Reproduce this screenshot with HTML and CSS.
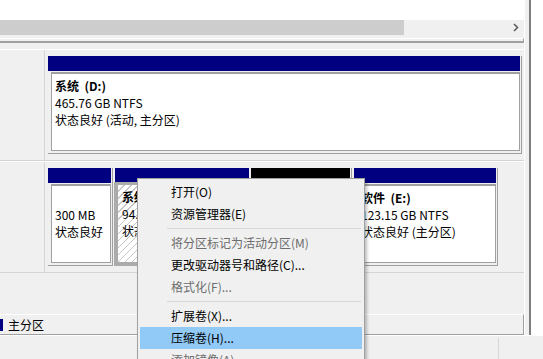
FILE: index.html
```html
<!DOCTYPE html>
<html lang="zh-CN">
<head>
    <meta charset="UTF-8">
    <title>磁盘管理</title>
    <link rel="stylesheet" href="styles.css">
</head>
<body>
    <div class="app">
        <div class="work">
            <div class="main">
                <!-- volume list (scrolled) -->
                <div class="list-body"></div>
                <div class="hscroll">
                    <div class="thumb"></div>
                    <div class="track"></div>
                    <div class="arrow">
                        <svg width="6" height="9" viewBox="0 0 6 9"><polyline points="1,1 4.5,4.5 1,8" fill="none" stroke="#606060" stroke-width="1.6"/></svg>
                    </div>
                </div>
                <div class="list-edge"></div>

                <!-- graphical view -->
                <div class="graph">
                    <div class="disk">
                        <div class="disk-label"></div>
                        <div class="parts">
                            <div class="part p-sysd">
                                <div class="head"></div>
                                <div class="body">
                                    <div class="box"><b>系统  (D:)</b>
465.76 GB NTFS
状态良好 (活动, 主分区)</div>
                                </div>
                            </div>
                        </div>
                    </div>
                    <div class="disk">
                        <div class="disk-label"></div>
                        <div class="parts">
                            <div class="part p-boot">
                                <div class="head"></div>
                                <div class="body">
                                    <div class="box">
300 MB
状态良好</div>
                                </div>
                            </div>
                            <div class="part sel p-sysc">
                                <div class="head"></div>
                                <div class="body">
                                    <div class="box"><b>系统  (C:)</b>
94.00 GB NTFS
状态良好 (启动, 页面文件, 主分区)</div>
                                </div>
                            </div>
                            <div class="part p-free">
                                <div class="head free"></div>
                                <div class="body">
                                    <div class="box">
48.00 GB
未分配</div>
                                </div>
                            </div>
                            <div class="part p-soft">
                                <div class="head"></div>
                                <div class="body">
                                    <div class="box"><b>软件  (E:)</b>
123.15 GB NTFS
状态良好 (主分区)</div>
                                </div>
                            </div>
                        </div>
                    </div>
                    <div class="legend">
                        <span class="swatch"></span>
                        <span>主分区</span>
                    </div>
                </div>
            </div>
            <div class="sash"></div>
            <div class="sash-line"></div>
            <div class="side"></div>
        </div>
        <div class="status">
            <div class="status-cell"></div>
            <div class="status-cell last"></div>
        </div>

        <!-- context menu of the selected volume -->
        <ul class="menu">
            <li>打开(O)</li>
            <li>资源管理器(E)</li>
            <li class="sep"></li>
            <li class="off">将分区标记为活动分区(M)</li>
            <li>更改驱动器号和路径(C)...</li>
            <li class="off">格式化(F)...</li>
            <li class="sep"></li>
            <li>扩展卷(X)...</li>
            <li class="hot">压缩卷(H)...</li>
            <li class="off">添加镜像(A)...</li>
            <li>删除卷(D)...</li>
            <li class="sep"></li>
            <li>属性(P)</li>
            <li>帮助(H)</li>
        </ul>
    </div>
</body>
</html>
```

FILE: styles.css
```css
body {
    margin: 0;
    font-family: "Noto Sans CJK SC", "Noto Sans", sans-serif;
    font-size: 12px;
    color: #000;
}
.app {
    position: relative;
    width: 543px;
    height: 359px;
    overflow: hidden;
    background-color: #f0f0f0;
    display: flex;
    flex-direction: column;
}
.work {
    height: 335px;
    display: flex;
}
.main {
    width: 524px;
    display: flex;
    flex-direction: column;
}
.list-body {
    height: 20px;
    background: #fff;
}
.hscroll {
    height: 15px;
    display: flex;
}
.hscroll .thumb {
    width: 404px;
    background: #cdcdcd;
}
.hscroll .track {
    flex: 1;
}
.hscroll .arrow {
    width: 17px;
    display: flex;
    align-items: center;
    justify-content: center;
}
.list-edge {
    height: 2px;
    margin-top: 3px;
    border-top: 1px solid #fff;
    border-bottom: 2px solid #a0a0a0;
    border-right: 1px solid #a0a0a0;
}
.graph {
    flex: 1;
    display: flex;
    flex-direction: column;
    padding-top: 6px;
}
.disk {
    display: flex;
    border-top: 1px solid #fff;
    border-bottom: 1px solid #d4d4d4;
}
.disk-label {
    width: 44px;
    border-right: 1px solid #d4d4d4;
}
.parts {
    flex: 1;
    display: flex;
    gap: 2px;
    height: 98px;
    padding: 6px 0 6px 3px;
}
.part {
    display: flex;
    flex-direction: column;
    box-sizing: border-box;
    padding: 0 1px 2px 0;
    border-right: 1px solid #a0a0a0;
    border-bottom: 1px solid #a0a0a0;
}
.p-sysd { width: 474px; }
.p-boot { width: 65px; }
.p-sysc { width: 134px; }
.p-free { width: 101px; }
.p-soft { width: 144px; }
.head {
    height: 15px;
    flex-shrink: 0;
    background: #000080;
}
.head.free {
    background: #000;
}
.body {
    flex: 1;
    display: flex;
    min-height: 0;
    padding: 1px 0 0 3px;
}
.box {
    flex: 1;
    min-width: 0;
    background: #fff;
    border: 1px solid #a0a0a0;
    border-top-width: 2px;
    padding: 3px 0 0 3px;
    line-height: 17px;
    white-space: pre;
    overflow: hidden;
}
.part.sel {
    padding: 0;
    border: none;
}
.part.sel .body {
    padding: 0;
    margin: -1px 0 0 -1px;
}
.part.sel .box {
    border: 4px solid #ababab;
    border-top-width: 3px;
    padding: 3px 0 0 4px;
    background: repeating-linear-gradient(135deg, #fff 0 4px, #c6c6c6 4px 5px);
}
.legend {
    margin-top: auto;
    height: 19px;
    display: flex;
    align-items: center;
    gap: 5px;
    border-top: 1px solid #fff;
    border-right: 1px solid #a0a0a0;
    border-bottom: 1px solid #a0a0a0;
}
.legend .swatch {
    width: 12px;
    height: 12px;
    margin-left: -9px;
    background: #000080;
}
.sash {
    width: 4px;
    border-left: 1px solid #fff;
}
.sash-line {
    width: 2px;
    background: #7d7d7d;
}
.side {
    flex: 1;
    background: #fff;
}
.status {
    flex: 1;
    display: flex;
    border-top: 1px solid #fff;
}
.status-cell {
    width: 498px;
    margin-top: 2px;
    border-right: 1px solid #d7d7d7;
}
.status-cell.last {
    flex: 1;
    border-right: none;
}
.menu {
    position: absolute;
    left: 137px;
    top: 178px;
    width: 228px;
    box-sizing: border-box;
    margin: 0;
    padding: 2px;
    list-style: none;
    background: #f0f0f0;
    border: 1px solid #a0a0a0;
    box-shadow: 2px 2px 3px rgba(0, 0, 0, 0.25);
}
.menu li {
    height: 22px;
    line-height: 22px;
    padding-left: 31px;
    white-space: nowrap;
}
.menu li.off {
    color: #6d6d6d;
}
.menu li.hot {
    background: #91c9f7;
}
.menu li.sep {
    height: 1px;
    padding: 0;
    margin: 3px 1px 3px 27px;
    background: #d7d7d7;
}
```
